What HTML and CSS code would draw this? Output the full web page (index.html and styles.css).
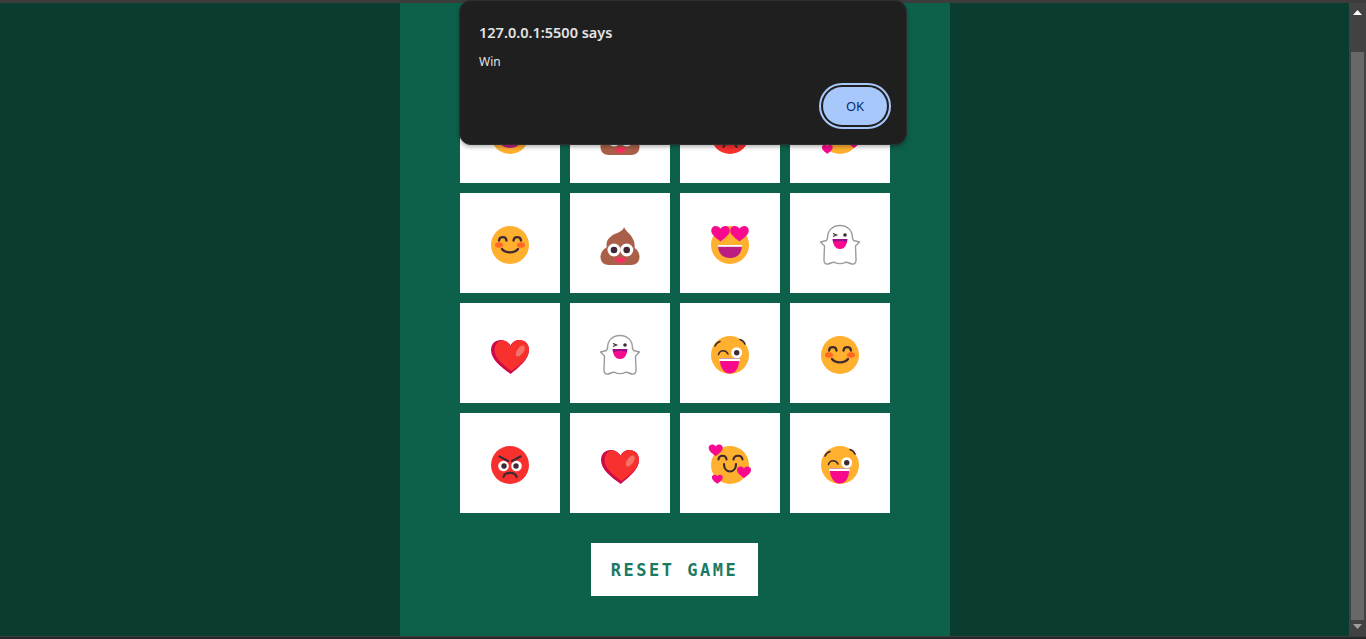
FILE: index.html
```html
<!DOCTYPE html>
<html>
<head>
    <meta charset="UTF-8">
    <meta name="viewport" content="width=device-width, initial-scale=1.0">
    <title>Memory Game</title>
    <link rel="stylesheet" href="styles.css">
</head>
<body>
    <svg class="sprites" xmlns="http://www.w3.org/2000/svg">
        <defs>
            <path id="heart-shape" d="M0 5.600C-1 4.600-6.400 1.500-6.400-1.800C-6.400-3.800-5-5-3.300-5C-2-5-.7-4.400 0-3.200C.7-4.400 2-5 3.300-5C5-5 6.400-3.800 6.400-1.800C6.400 1.500 1 4.600 0 5.600Z"/>

            <symbol id="smile" viewBox="0 0 44 44">
                <circle cx="22" cy="24" r="19" fill="#ffb02e"/>
                <ellipse cx="11" cy="24" rx="4" ry="2.700" fill="#ff6723"/>
                <ellipse cx="33" cy="24" rx="4" ry="2.700" fill="#ff6723"/>
                <path d="M11 19.500C11.500 15 18 15 18.500 19.500M25.500 19.500C26 15 32.500 15 33 19.500M14 28C17.500 32.500 26.500 32.500 30 28" fill="none" stroke="#402a32" stroke-width="2.300" stroke-linecap="round"/>
            </symbol>

            <symbol id="poop" viewBox="0 0 44 44">
                <path d="M26 6C25.500 9 22 11 18 12.500C13 14.500 9 18 8.500 23C8.500 24.500 8.700 25.500 9 26C5 28 2.500 32 2.500 36C2.500 41 6 44 11 44H33C38 44 41.500 41 41.500 36C41.500 32 39.500 28.500 36.500 27C37.500 22 35 16 30 11.500C28 9.500 27 8 26 6Z" fill="#aa6048"/>
                <circle cx="16" cy="29" r="6.500" fill="#fff"/>
                <circle cx="28.700" cy="29" r="6.500" fill="#fff"/>
                <circle cx="16" cy="29" r="3.300" fill="#402a32"/>
                <circle cx="28.700" cy="29" r="3.300" fill="#402a32"/>
                <path d="M17 36.500H28C28 39 25.500 42 22.500 42C19.500 42 17 39 17 36.500Z" fill="#f92f60"/>
            </symbol>

            <symbol id="heart-eyes" viewBox="0 0 44 44">
                <circle cx="22" cy="24" r="19" fill="#ffb02e"/>
                <path d="M10 24H34C34 33 29 37 22 37C15 37 10 33 10 24Z" fill="#bb1d80"/>
                <path d="M10 24H34V25.800H10Z" fill="#fff"/>
                <use href="#heart-shape" transform="translate(12.500 12.300) scale(1.450)" fill="#f70a8d"/>
                <use href="#heart-shape" transform="translate(31.500 12.300) scale(1.450)" fill="#f70a8d"/>
            </symbol>

            <symbol id="ghost" viewBox="0 0 44 44">
                <path d="M22 4.500C14 4.500 9.500 10 9.500 17L8.500 19.500L2.500 21L6.500 25L6 38C5.800 41.500 7 43.500 10 43C13 42.500 14.500 40.500 17 41.500C19.500 43 24.500 43 27 41.500C29.500 40.500 31 42.500 34 43C37 43.500 38.200 41.500 38 38L37.500 25L41.500 21L35.500 19.500L34.500 17C34.500 10 30 4.500 22 4.500Z" fill="#fff" stroke="#9b9b9b" stroke-width="1.400" stroke-linejoin="round"/>
                <path d="M15 12.500L18.500 14L15 15.500" fill="none" stroke="#402a32" stroke-width="1.300"/>
                <circle cx="27" cy="14" r="1.800" fill="#402a32"/>
                <path d="M14.700 18H29.300C29.300 23 27 28 22 28C17 28 14.700 23 14.700 18Z" fill="#f70a8d"/>
                <path d="M14.700 18H29.300C29.300 19.500 29 20.500 28.700 21C25 19.500 19 19.500 15.300 21C15 20.500 14.700 19.500 14.700 18Z" fill="#990f8a"/>
            </symbol>

            <symbol id="heart" viewBox="0 0 44 44">
                <path d="M22.700 43C13 36 3 28.500 3 19C3 12.500 7.500 9 12.500 9C16.500 9 20 11 22.700 14.500C24 11 27.500 9 31.500 9C36.500 9 41 12.500 41 19C41 28.500 31 36 22.700 43Z" fill="#ca0b4a"/>
                <path d="M23.500 40C15 34 6.500 27 6.500 19C6.500 13.500 10 9.500 14.500 9.500C18 9.500 21 11.500 22.700 15C24.500 11 27.500 9 31.500 9C36.500 9 41 12.500 41 19C41 27.500 31.500 34 23.500 40Z" fill="#f8312f"/>
                <ellipse cx="32.300" cy="20" rx="3.200" ry="6.300" transform="rotate(35 32.300 20)" fill="#f37366"/>
            </symbol>

            <symbol id="wink" viewBox="0 0 44 44">
                <circle cx="22" cy="24" r="19" fill="#ffb02e"/>
                <path d="M7 15C8 12.500 10 11 12 10.500M32 8.500C34 9 36 10.500 37 13M10.500 23.500C12 18.500 18 18.500 20 23" fill="none" stroke="#402a32" stroke-width="1.600" stroke-linecap="round"/>
                <circle cx="28.700" cy="21.700" r="5.500" fill="#fff"/>
                <circle cx="28.700" cy="21.700" r="2.700" fill="#402a32"/>
                <path d="M11.300 27.500H31.700V30H11.300Z" fill="#fff"/>
                <path d="M11.300 27H31.700V27.800H11.300Z" fill="#c98ab8"/>
                <path d="M12 30H31C31 36 28 42.500 21.500 42.500C16 42.500 12 36 12 30Z" fill="#f70a8d"/>
            </symbol>

            <symbol id="angry" viewBox="0 0 44 44">
                <circle cx="22" cy="24" r="19" fill="#f8312f"/>
                <circle cx="15.500" cy="25" r="5.300" fill="#fff"/>
                <circle cx="28.500" cy="25" r="5.300" fill="#fff"/>
                <circle cx="16" cy="25" r="2.700" fill="#402a32"/>
                <circle cx="28" cy="25" r="2.700" fill="#402a32"/>
                <path d="M11.500 15.500L20 20M32.500 15.500L24 20M15.500 36C17 30.500 27 30.500 28.500 36" fill="none" stroke="#402a32" stroke-width="2.200" stroke-linecap="round"/>
            </symbol>

            <symbol id="hearts" viewBox="0 0 44 44">
                <circle cx="22" cy="24" r="19" fill="#ffb02e"/>
                <path d="M10.500 18.500C11 13.500 18 13.500 18.500 18.500M25.500 18.500C26 13.500 34 13.500 34.500 18.500M16 23C16 33 28 33 28 23" fill="none" stroke="#402a32" stroke-width="2.200" stroke-linecap="round"/>
                <use href="#heart-shape" transform="translate(7.700 9) scale(1.100)" fill="#f70a8d"/>
                <use href="#heart-shape" transform="translate(36 31) scale(1.100)" fill="#f70a8d"/>
                <use href="#heart-shape" transform="translate(9.300 38) scale(.85)" fill="#f70a8d"/>
            </symbol>
        </defs>
    </svg>

    <div class="top-edge"></div>

    <div class="window">
        <main class="page">
            <section class="game">
                <div class="board">
                    <div class="card"><svg class="emoji"><use href="#heart-eyes"/></svg></div>
                    <div class="card"><svg class="emoji"><use href="#poop"/></svg></div>
                    <div class="card"><svg class="emoji"><use href="#angry"/></svg></div>
                    <div class="card"><svg class="emoji"><use href="#hearts"/></svg></div>

                    <div class="card"><svg class="emoji"><use href="#smile"/></svg></div>
                    <div class="card"><svg class="emoji"><use href="#poop"/></svg></div>
                    <div class="card"><svg class="emoji"><use href="#heart-eyes"/></svg></div>
                    <div class="card"><svg class="emoji"><use href="#ghost"/></svg></div>

                    <div class="card"><svg class="emoji"><use href="#heart"/></svg></div>
                    <div class="card"><svg class="emoji"><use href="#ghost"/></svg></div>
                    <div class="card"><svg class="emoji"><use href="#wink"/></svg></div>
                    <div class="card"><svg class="emoji"><use href="#smile"/></svg></div>

                    <div class="card"><svg class="emoji"><use href="#angry"/></svg></div>
                    <div class="card"><svg class="emoji"><use href="#heart"/></svg></div>
                    <div class="card"><svg class="emoji"><use href="#hearts"/></svg></div>
                    <div class="card"><svg class="emoji"><use href="#wink"/></svg></div>
                </div>
                <button class="reset">RESET GAME</button>
            </section>

            <div class="alert">
                <h2 class="alert-title">127.0.0.1:5500 says</h2>
                <p class="alert-text">Win</p>
                <div class="alert-actions">
                    <button class="alert-ok">OK</button>
                </div>
            </div>
        </main>

        <div class="scrollbar">
            <svg class="scroll-arrow" viewBox="0 0 9 5"><path d="M4.500 0L9 5H0Z" fill="#fff"/></svg>
            <div class="scroll-thumb"></div>
            <svg class="scroll-arrow" viewBox="0 0 9 5"><path d="M0 0H9L4.500 5Z" fill="#a0a0a0"/></svg>
        </div>
    </div>

    <div class="bottom-edge"></div>
</body>
</html>
```

FILE: styles.css
```css
* {
    margin: 0;
    padding: 0;
    box-sizing: border-box;
}

html, body {
    height: 100%;
    overflow: hidden;
}

body {
    display: flex;
    flex-direction: column;
    background: #0a3c30;
}

.sprites {
    display: none;
}

.top-edge {
    height: 3px;
    background: #3c3c3c;
    flex-shrink: 0;
}

.bottom-edge {
    height: 3px;
    background: #26282a;
    border-top: 1px solid #3c3c3c;
    flex-shrink: 0;
}

.window {
    flex: 1;
    display: flex;
    min-height: 0;
}

.page {
    flex: 1;
    display: flex;
    justify-content: center;
    position: relative;
    min-width: 0;
}

.game {
    width: 550px;
    background: #0d614a;
    padding: 80px 60px 0;
    display: flex;
    flex-direction: column;
    align-items: center;
}

.board {
    display: grid;
    grid-template-columns: repeat(4, 100px);
    grid-auto-rows: 100px;
    gap: 10px;
}

.card {
    background: white;
    display: flex;
    align-items: center;
    justify-content: center;
}

.emoji {
    width: 44px;
    height: 44px;
}

.reset {
    margin-top: 30px;
    height: 53px;
    padding: 0 20px;
    background: white;
    border: none;
    color: #1b7a63;
    font-family: "DejaVu Sans Mono", monospace;
    font-size: 17px;
    font-weight: bold;
    letter-spacing: 2.5px;
}

.alert {
    position: absolute;
    top: -3px;
    left: 459px;
    width: 448px;
    height: 145px;
    padding: 21px 19px 0;
    background: #1f1f1f;
    border-radius: 12px;
    border: 1px solid #2e2e2e;
    box-shadow: 0 2px 4px rgba(0, 0, 0, 0.3);
    font-family: "Noto Sans", sans-serif;
    color: #e3e3e3;
}

.alert-title {
    font-size: 14.5px;
    font-weight: 600;
    line-height: 20px;
}

.alert-text {
    margin-top: 10px;
    font-size: 12px;
    line-height: 20px;
}

.alert-actions {
    margin-top: 15px;
    display: flex;
    justify-content: flex-end;
}

.alert-ok {
    width: 64px;
    height: 38px;
    background: #a8c7fa;
    color: #062e6f;
    border: none;
    border-radius: 19px;
    outline: 2px solid #a8c7fa;
    outline-offset: 2px;
    font-family: "Noto Sans", sans-serif;
    font-size: 13px;
}

.scrollbar {
    width: 17px;
    flex-shrink: 0;
    background: #424242;
    display: flex;
    flex-direction: column;
    align-items: center;
    padding: 7px 0 7px;
}

.scroll-arrow {
    width: 9px;
    height: 5px;
    flex-shrink: 0;
}

.scroll-thumb {
    width: 13px;
    flex: 1;
    margin: 37px 0 4px;
    background: #686868;
}
```
